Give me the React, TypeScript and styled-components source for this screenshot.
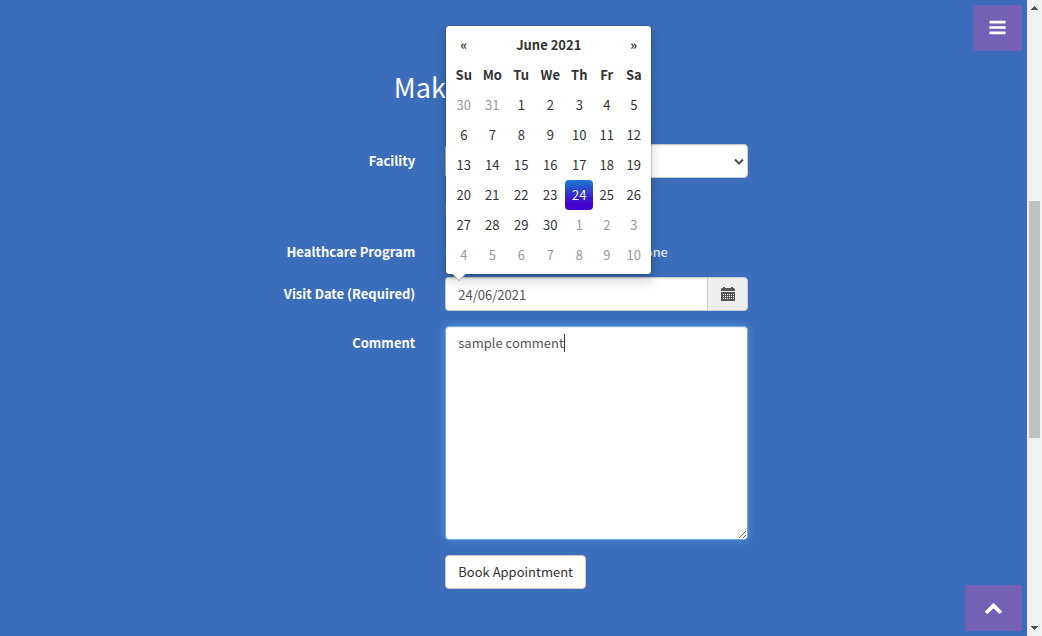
import React, { useEffect, useRef, useState } from 'react';
import styled, { createGlobalStyle, css } from 'styled-components';

const GlobalStyle = createGlobalStyle`
  *, *::before, *::after { box-sizing: border-box; }
  body {
    margin: 0;
    background: #3b6dba;
    color: #fff;
    font-family: "Source Sans Pro", "Noto Sans CJK SC", "Noto Sans", sans-serif;
    font-size: 13px;
    line-height: 20px;
  }
  button, input, select, textarea { font: inherit; }
`;

const Shell = styled.div`
  display: flex;
  min-height: 100vh;
`;

const Section = styled.main`
  flex: 1;
  min-width: 0;
  padding: 70px 14px 24px;
`;

const Title = styled.h2`
  margin: 0 0 41px;
  font-size: 27px;
  font-weight: 400;
  line-height: 33px;
  text-align: center;
`;

const Form = styled.form`
  display: grid;
  gap: 15px;
`;

const FormRow = styled.div`
  display: grid;
  grid-template-columns: 5fr 4fr 3fr;
`;

const labelText = css`
  padding: 7px 15px 0;
  font-weight: 700;
  text-align: right;
`;

const Label = styled.label`
  ${labelText}
`;

const GroupLabel = styled.span`
  ${labelText}
`;

const Control = styled.div`
  grid-column: 2;
  min-width: 0;
  padding: 0 15px;
`;

const field = css`
  display: block;
  width: 100%;
  height: 34px;
  padding: 6px 12px;
  border: 1px solid #ccc;
  border-radius: 4px;
  background-color: #fff;
  color: #555;
  box-shadow: inset 0 1px 1px rgba(0, 0, 0, 0.075);
  outline: 0;

  &:focus {
    border-color: #66afe9;
    box-shadow: inset 0 1px 1px rgba(0, 0, 0, 0.075), 0 0 8px rgba(102, 175, 233, 0.6);
  }
`;

const FieldBox = styled.div`
  position: relative;
`;

const Select = styled.select`
  ${field}
  appearance: none;
`;

const SelectChevron = styled.svg`
  position: absolute;
  top: 14px;
  right: 3px;
  pointer-events: none;
`;

const TextInput = styled.input`
  ${field}
  flex: 1;
  min-width: 0;
  border-right: 0;
  border-radius: 4px 0 0 4px;
`;

const TextArea = styled.textarea`
  ${field}
  height: 214px;
  resize: vertical;
  caret-color: transparent;
`;

const Caret = styled.span`
  position: absolute;
  top: 8px;
  width: 1px;
  height: 18px;
  background: #333;
  pointer-events: none;
`;

const Choices = styled.div`
  display: flex;
  gap: 10px;
  padding-top: 7px;
`;

const Choice = styled.label`
  display: flex;
  gap: 7px;
  align-items: center;
  line-height: 20px;
  white-space: nowrap;

  input { margin: 0; }
`;

const DateGroup = styled.div`
  position: relative;
  display: flex;
`;

const DateButton = styled.button`
  display: flex;
  align-items: center;
  justify-content: center;
  width: 41px;
  padding: 0;
  border: 1px solid #ccc;
  border-radius: 0 4px 4px 0;
  background: #eee;
  color: #555;
`;

const SubmitButton = styled.button`
  padding: 6px 12px;
  border: 1px solid #ccc;
  border-radius: 4px;
  background: #fff;
  color: #333;
`;

const Popup = styled.div`
  position: absolute;
  z-index: 10;
  bottom: 36px;
  left: 0;
  padding: 4px;
  border: 1px solid rgba(0, 0, 0, 0.15);
  border-radius: 4px;
  background: #fff;
  background-clip: padding-box;
  color: #333;
  box-shadow: 0 6px 12px rgba(0, 0, 0, 0.175);

  &::before, &::after {
    content: "";
    position: absolute;
    border-style: solid;
    border-color: transparent;
  }
  &::before {
    bottom: -7px;
    left: 6px;
    border-width: 7px 7px 0;
    border-top-color: #999;
  }
  &::after {
    bottom: -6px;
    left: 7px;
    border-width: 6px 6px 0;
    border-top-color: #fff;
  }
`;

const Calendar = styled.table`
  width: 197px;
  table-layout: fixed;
  border-collapse: separate;
  border-spacing: 0;
  line-height: 20px;

  th, td {
    height: 30px;
    padding: 5px 0;
    border-radius: 4px;
    text-align: center;
  }
`;

const DayColumn = styled.col<{ $width: number }>`
  width: ${p => p.$width}px;
`;

const MonthStep = styled.button`
  padding: 0;
  border: 0;
  background: none;
  color: inherit;
  font-weight: 700;
`;

const Day = styled.td<{ $muted: boolean; $active: boolean }>`
  color: ${p => (p.$active ? '#fff' : p.$muted ? '#999' : '#333')};
  ${p => p.$active && css`
    background: linear-gradient(to bottom, #1c7ad0, #4400cc 80%);
    text-shadow: 0 -1px 0 rgba(0, 0, 0, 0.25);
  `}
`;

const CornerLink = styled.a<{ $corner: 'top' | 'bottom' }>`
  position: fixed;
  z-index: 20;
  right: 20px;
  ${p => p.$corner}: 5px;
  display: flex;
  align-items: center;
  justify-content: center;
  width: ${p => (p.$corner === 'top' ? 49 : 57)}px;
  height: 46px;
  padding-bottom: 1px;
  background: #7460b5;
  color: #fff;
`;

const Scrollbar = styled.div`
  position: sticky;
  top: 0;
  display: flex;
  flex-direction: column;
  align-items: center;
  width: 15px;
  height: 100vh;
  background: #f1f1f1;
`;

const Spacer = styled.div<{ $grow: number }>`
  flex: ${p => p.$grow};
`;

const Thumb = styled.div`
  flex: 237;
  width: 11px;
  background: #c1c1c1;
`;

const Arrow = ({ d }: { d: string }) => (
  <svg width="15" height="15" viewBox="0 0 15 15" fill="#505050" aria-hidden="true">
    <path d={d} />
  </svg>
);

const CalendarIcon = () => (
  <svg width="14" height="14" viewBox="0 0 14 14" aria-hidden="true">
    <path fill="currentColor" d="M1 1h1V0h2v1h6V0h2v1h1l1 1v2H0V2zM0 5h14v9H0z" />
    <path
      fill="#eee"
      d="M2 7h1v1H2zm2 0h1v1H4zm2 0h1v1H6zm2 0h1v1H8zm2 0h1v1h-1zm2 0h1v1h-1zM2 9h1v1H2zm2 0h1v1H4zm2 0h1v1H6zm2 0h1v1H8zm2 0h1v1h-1zm2 0h1v1h-1zM2 11h1v1H2zm2 0h1v1H4zm2 0h1v1H6zm2 0h1v1H8zm2 0h1v1h-1zm2 0h1v1h-1z"
    />
  </svg>
);

const columnWidths = [27, 30, 28, 30, 28, 27, 27];
const weekdays = ['Su', 'Mo', 'Tu', 'We', 'Th', 'Fr', 'Sa'];
const firstShown = new Date(2021, 4, 30);
const weeks = Array.from({ length: 6 }, (_, w) =>
  Array.from({ length: 7 }, (_, d) => {
    const date = new Date(firstShown.getFullYear(), firstShown.getMonth(), firstShown.getDate() + w * 7 + d);
    return { day: date.getDate(), inMonth: date.getMonth() === 5 };
  }),
);

function DatePopup() {
  return (
    <Popup>
      <Calendar>
        <colgroup>
          {columnWidths.map((width, i) => <DayColumn key={i} $width={width} />)}
        </colgroup>
        <thead>
          <tr>
            <th><MonthStep type="button" aria-label="Previous month">«</MonthStep></th>
            <th colSpan={5}>June 2021</th>
            <th><MonthStep type="button" aria-label="Next month">»</MonthStep></th>
          </tr>
          <tr>{weekdays.map(name => <th key={name} scope="col">{name}</th>)}</tr>
        </thead>
        <tbody>
          {weeks.map((week, i) => (
            <tr key={i}>
              {week.map(({ day, inMonth }) => (
                <Day key={day} $muted={!inMonth} $active={inMonth && day === 24}>{day}</Day>
              ))}
            </tr>
          ))}
        </tbody>
      </Calendar>
    </Popup>
  );
}

function CommentBox() {
  const [comment, setComment] = useState('sample comment');
  const [caretLeft, setCaretLeft] = useState(13);
  const boxRef = useRef<HTMLTextAreaElement>(null);

  useEffect(() => {
    const box = boxRef.current;
    if (box) {
      box.focus();
      box.setSelectionRange(box.value.length, box.value.length);
    }
  }, []);

  // The caret follows the end of the typed line.
  useEffect(() => {
    const box = boxRef.current;
    const pen = document.createElement('canvas').getContext('2d');
    if (box && pen) {
      const style = getComputedStyle(box);
      pen.font = `${style.fontSize} ${style.fontFamily}`;
      setCaretLeft(13 + Math.round(pen.measureText(comment).width));
    }
  }, [comment]);

  return (
    <FieldBox>
      <TextArea id="comment" ref={boxRef} value={comment} onChange={e => setComment(e.target.value)} />
      <Caret style={{ left: caretLeft }} />
    </FieldBox>
  );
}

export default function App() {
  return (
    <>
      <GlobalStyle />
      <Shell>
        <Section>
          <Title>Make Appointment</Title>
          <Form onSubmit={e => e.preventDefault()}>
            <FormRow>
              <Label htmlFor="facility">Facility</Label>
              <Control>
                <FieldBox>
                  <Select id="facility">
                    <option>Tokyo CURA Healthcare Center</option>
                    <option>Hongkong CURA Healthcare Center</option>
                    <option>Seoul CURA Healthcare Center</option>
                  </Select>
                  <SelectChevron width="12" height="8" viewBox="0 0 12 8" aria-hidden="true">
                    <path d="M2 1.500l4 4 4-4" fill="none" stroke="#555" strokeWidth="2.200" />
                  </SelectChevron>
                </FieldBox>
              </Control>
            </FormRow>
            <FormRow>
              <Control>
                <Choices>
                  <Choice><input type="checkbox" />Apply for readmission</Choice>
                </Choices>
              </Control>
            </FormRow>
            <FormRow role="radiogroup" aria-labelledby="program">
              <GroupLabel id="program">Healthcare Program</GroupLabel>
              <Control>
                <Choices>
                  <Choice><input type="radio" name="program" defaultChecked />Medicare</Choice>
                  <Choice><input type="radio" name="program" />Medicaid</Choice>
                  <Choice><input type="radio" name="program" />None</Choice>
                </Choices>
              </Control>
            </FormRow>
            <FormRow>
              <Label htmlFor="visit-date">Visit Date (Required)</Label>
              <Control>
                <DateGroup>
                  <TextInput id="visit-date" type="text" defaultValue="24/06/2021" />
                  <DateButton type="button" aria-label="Choose date"><CalendarIcon /></DateButton>
                  <DatePopup />
                </DateGroup>
              </Control>
            </FormRow>
            <FormRow>
              <Label htmlFor="comment">Comment</Label>
              <Control>
                <CommentBox />
              </Control>
            </FormRow>
            <FormRow>
              <Control>
                <SubmitButton type="submit">Book Appointment</SubmitButton>
              </Control>
            </FormRow>
          </Form>
        </Section>
        <Scrollbar aria-hidden="true">
          <Arrow d="M7 6h1v1h1v1h1v1h1v1H4V9h1V8h1V7h1z" />
          <Spacer $grow={186} />
          <Thumb />
          <Spacer $grow={183} />
          <Arrow d="M4 5h7v1h-1v1H9v1H8v1H7V8H6V7H5V6H4z" />
        </Scrollbar>
      </Shell>
      <CornerLink href="#menu" $corner="top" aria-label="Menu">
        <svg width="19" height="19" viewBox="0 0 1792 1792" fill="currentColor" aria-hidden="true">
          <path d="M1664 1344v128q0 26-19 45t-45 19h-1408q-26 0-45-19t-19-45v-128q0-26 19-45t45-19h1408q26 0 45 19t19 45zm0-512v128q0 26-19 45t-45 19h-1408q-26 0-45-19t-19-45v-128q0-26 19-45t45-19h1408q26 0 45 19t19 45zm0-512v128q0 26-19 45t-45 19h-1408q-26 0-45-19t-19-45v-128q0-26 19-45t45-19h1408q26 0 45 19t19 45z" />
        </svg>
      </CornerLink>
      <CornerLink href="#top" $corner="bottom" aria-label="Back to top">
        <svg width="19" height="19" viewBox="0 0 1792 1792" fill="currentColor" aria-hidden="true">
          <path d="M1683 1331l-166 165q-19 19-45 19t-45-19l-531-531-531 531q-19 19-45 19t-45-19l-166-165q-19-19-19-45.500t19-45.500l742-741q19-19 45-19t45 19l742 741q19 19 19 45.500t-19 45.500z" />
        </svg>
      </CornerLink>
    </>
  );
}
